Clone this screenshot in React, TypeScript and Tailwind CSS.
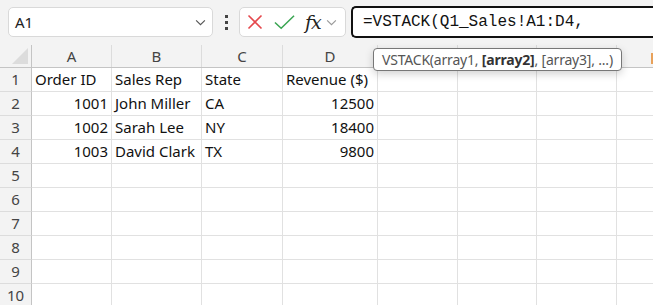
import React from 'react'

const cols = [
    { key: 'A', w: 'w-[80px]' },
    { key: 'B', w: 'w-[90px]' },
    { key: 'C', w: 'w-[81px]' },
    { key: 'D', w: 'w-[95px]' },
    { key: 'E', w: 'w-[80px]' },
    { key: 'F', w: 'w-[79px]' },
    { key: 'G', w: 'w-[80px]' },
    { key: 'H', w: 'w-[80px]' },
]

// E..H letters sit under the function tooltip / off screen in the shot
const shownHeaders = ['A', 'B', 'C', 'D']

type Cell = { v: string; num?: boolean }

const data: Cell[][] = [
    [{ v: 'Order ID' }, { v: 'Sales Rep' }, { v: 'State' }, { v: 'Revenue ($)' }],
    [{ v: '1001', num: true }, { v: 'John Miller' }, { v: 'CA' }, { v: '12500', num: true }],
    [{ v: '1002', num: true }, { v: 'Sarah Lee' }, { v: 'NY' }, { v: '18400', num: true }],
    [{ v: '1003', num: true }, { v: 'David Clark' }, { v: 'TX' }, { v: '9800', num: true }],
]

function Chevron({ className }: { className?: string }) {
    return (
        <svg viewBox="0 0 12 8" className={className} fill="none" stroke="currentColor" strokeWidth="1.3">
            <path d="M1 1.5 L6 6.5 L11 1.5" />
        </svg>
    )
}

export default function App() {
    const rows = Array.from({ length: 10 }, (_, i) => i)

    return (
        <div className="relative w-[653px] h-[305px] overflow-hidden bg-white font-['Noto_Sans',sans-serif] text-[#222]">
            {/* formula bar */}
            <div className="h-[45px] bg-[#f3f3f3] flex items-start pt-[7px] pl-[8px]">
                <div className="w-[205px] h-[30px] shrink-0 bg-white border border-[#d9d9d9] rounded-[5px] flex items-center pl-[6px] pr-[6px]">
                    <span className="text-[15px] text-[#222] flex-1">A1</span>
                    <Chevron className="w-[11px] h-[7px] text-[#555]" />
                </div>
                <div className="w-[26px] h-[30px] shrink-0 flex flex-col items-center justify-center gap-[3px]">
                    <span className="w-[3px] h-[3px] bg-[#444]" />
                    <span className="w-[3px] h-[3px] bg-[#444]" />
                    <span className="w-[3px] h-[3px] bg-[#444]" />
                </div>
                <div className="w-[107px] h-[30px] shrink-0 bg-white border border-[#d9d9d9] rounded-[5px] flex items-center pl-[7px]">
                    <svg viewBox="0 0 16 16" className="w-[16px] h-[16px]" stroke="#e5484d" strokeWidth="1.6" fill="none">
                        <path d="M1.5 1.5 L14.5 14.5 M14.5 1.5 L1.5 14.5" />
                    </svg>
                    <svg viewBox="0 0 22 16" className="w-[21px] h-[16px] ml-[11px]" stroke="#3aa552" strokeWidth="1.6" fill="none">
                        <path d="M1 8.5 L7.5 14.5 L21 1.5" />
                    </svg>
                    <span className="ml-[10px] font-['DejaVu_Serif',serif] italic text-[19px] leading-none text-[#222] tracking-[-1px]">
                        fx
                    </span>
                    <Chevron className="w-[11px] h-[7px] ml-[5px] text-[#999]" />
                </div>
                <div className="ml-[5px] -mt-[1px] flex-1 h-[32px] bg-white border-2 border-[#111] border-r-0 rounded-l-[5px] flex items-center pl-[10px]">
                    <span className="font-['Liberation_Mono',monospace] text-[16px] text-[#111] whitespace-pre">
                        =VSTACK(Q1_Sales!A1:D4,
                    </span>
                </div>
            </div>

            {/* column headers */}
            <div className="flex h-[23px] bg-[#f3f3f3] border-b border-[#c4c4c4]">
                <div className="w-[32px] shrink-0 relative border-r border-[#c4c4c4]">
                    <div className="absolute right-[3px] bottom-[3px] w-0 h-0 border-l-[16px] border-l-transparent border-b-[16px] border-b-[#dcdcdc]" />
                </div>
                {cols.map((c) => (
                    <div
                        key={c.key}
                        className={`${c.w} shrink-0 border-r border-[#dcdcdc] flex items-center justify-center text-[15px] text-[#444]`}
                    >
                        {shownHeaders.includes(c.key) ? c.key : ''}
                    </div>
                ))}
            </div>

            {/* rows */}
            {rows.map((r) => (
                <div key={r} className="flex h-[24px]">
                    <div className="w-[32px] shrink-0 bg-[#f3f3f3] border-r border-[#c4c4c4] border-b border-b-[#dcdcdc] flex items-center justify-center text-[15px] text-[#444]">
                        {r + 1}
                    </div>
                    {cols.map((c, ci) => {
                        const cell = data[r]?.[ci]
                        return (
                            <div
                                key={c.key}
                                className={`${c.w} shrink-0 border-r border-b border-[#e1e1e1] flex items-center px-[3px] text-[15px] text-[#111] whitespace-nowrap ${cell?.num ? 'justify-end' : 'justify-start'}`}
                            >
                                {cell?.v}
                            </div>
                        )
                    })}
                </div>
            ))}

            {/* function tooltip */}
            <div className="absolute left-[373px] top-[48px] h-[23px] px-[8px] flex items-center bg-white border border-[#777] rounded-[4px] shadow-[0_3px_8px_rgba(0,0,0,0.18)] text-[14px] text-[#555] whitespace-nowrap tracking-[-0.2px]">
                VSTACK(array1,&nbsp;<span className="font-bold text-[#333]">[array2]</span>, [array3], ...)
            </div>

            <div className="absolute left-[651px] top-[53px] w-[2px] h-[11px] bg-[#e8a15a]" />
        </div>
    )
}
